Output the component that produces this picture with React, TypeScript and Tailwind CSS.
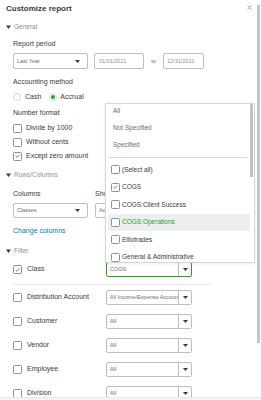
import React from "react";

const Arrow = () => (
  <svg width="5" height="3" viewBox="0 0 5 3">
    <path d="M0 0h5L2.5 3z" fill="#393a3d" />
  </svg>
);

const Tri = () => (
  <svg width="5" height="4" viewBox="0 0 5 4">
    <path d="M0 0.5h5L2.5 4z" fill="#393a3d" />
  </svg>
);

const Box = ({ checked, size = 9 }: { checked?: boolean; size?: number }) => (
  <div
    className={
      size === 9
        ? "w-[9px] h-[9px] shrink-0 border border-[#8d9096] rounded-[1.5px] bg-white flex items-center justify-center"
        : "w-[8px] h-[8px] shrink-0 border border-[#8d9096] rounded-[1.5px] bg-white flex items-center justify-center"
    }
  >
    {checked && (
      <svg width="5" height="4" viewBox="0 0 5 4">
        <path d="M0.6 2.1 L1.9 3.3 L4.4 0.7" stroke="#2ca01c" strokeWidth="0.9" fill="none" />
      </svg>
    )}
  </div>
);

const Heading = ({ text, cls }: { text: string; cls: string }) => (
  <div className={`${cls} flex items-center pl-[6px] gap-[3px]`}>
    <Tri />
    <span className="text-[6.5px] text-[#8d9096]">{text}</span>
  </div>
);

const FilterRow = ({
  label,
  value,
  checked,
  green,
  cls,
}: {
  label: string;
  value: string;
  checked?: boolean;
  green?: boolean;
  cls: string;
}) => (
  <div className={`${cls} flex items-center h-[15px] shrink-0 pl-[13px]`}>
    <Box checked={checked} />
    <span className="ml-[5px] w-[79px] text-[7px] text-[#393a3d] whitespace-nowrap">{label}</span>
    <div
      className={
        green
          ? "w-[86px] h-[15px] border border-[#2ca01c] rounded-[2px] flex bg-white"
          : "w-[86px] h-[15px] border border-[#babec5] rounded-[2px] flex bg-white"
      }
    >
      <div className="flex-1 pl-[3px] text-[5.5px] text-[#6b6c72] flex items-center overflow-hidden whitespace-nowrap">
        {value}
      </div>
      <div className="w-[13px] border-l border-[#babec5] flex items-center justify-center">
        <Arrow />
      </div>
    </div>
  </div>
);

const DDItem = ({
  text,
  checked,
  active,
}: {
  text: string;
  checked?: boolean;
  active?: boolean;
}) => (
  <div
    className={
      active
        ? "h-[17.5px] shrink-0 flex items-center pl-[3px] gap-[2px] bg-[#eceef1]"
        : "h-[17.5px] shrink-0 flex items-center pl-[3px] gap-[2px]"
    }
  >
    <Box checked={checked} />
    <span
      className={
        active
          ? "text-[6.5px] text-[#2ca01c] whitespace-nowrap"
          : "text-[6.5px] text-[#393a3d] whitespace-nowrap"
      }
    >
      {text}
    </span>
  </div>
);

export default function App() {
  return (
    <div className="w-[261px] h-[400px] bg-white overflow-hidden relative flex flex-col font-['Liberation_Sans',Arial,sans-serif]">
      <div className="flex flex-1 min-h-0">
        <div className="w-[257px] flex flex-col overflow-hidden">
          {/* header */}
          <div className="h-[18px] shrink-0 flex items-center pl-[6px]">
            <span className="text-[8px] font-bold text-[#393a3d]">Customize report</span>
            <svg className="ml-auto mr-[5px] mb-[3px]" width="5" height="5" viewBox="0 0 5 5">
              <path d="M0.5 0.5L4.5 4.5M4.5 0.5L0.5 4.5" stroke="#8d9096" strokeWidth="0.8" />
            </svg>
          </div>

          <Heading text="General" cls="h-[18px] shrink-0" />

          <div className="h-[16px] shrink-0 flex items-center pl-[13px] text-[7px] text-[#393a3d]">
            Report period
          </div>

          <div className="mt-[1px] h-[16px] shrink-0 flex items-center pl-[13px]">
            <div className="w-[75px] h-[16px] border border-[#babec5] rounded-[2px] flex items-center pl-[3px] pr-[7px] justify-between">
              <span className="text-[5.5px] text-[#6b6c72]">Last Year</span>
              <Arrow />
            </div>
            <div className="ml-[6px] w-[50px] h-[16px] border border-[#babec5] rounded-[2px] flex items-center pl-[4px] text-[5.5px] text-[#8d9096]">
              01/01/2021
            </div>
            <div className="w-[19px] text-center text-[5.5px] text-[#6b6c72]">to</div>
            <div className="w-[41px] h-[16px] border border-[#babec5] rounded-[2px] flex items-center pl-[3px] text-[5.5px] text-[#8d9096]">
              12/31/2021
            </div>
          </div>

          <div className="mt-[5px] h-[16px] shrink-0 flex items-center pl-[13px] text-[7px] text-[#393a3d]">
            Accounting method
          </div>

          <div className="h-[14px] shrink-0 flex items-center pl-[13px] text-[7px] text-[#393a3d]">
            <div className="w-[8px] h-[8px] rounded-full border border-[#d4d7dc]" />
            <span className="ml-[4px]">Cash</span>
            <div className="ml-[8px] w-[8px] h-[8px] rounded-full border border-[#d4d7dc] flex items-center justify-center">
              <div className="w-[4px] h-[4px] rounded-full bg-[#2ca01c]" />
            </div>
            <span className="ml-[3px]">Accrual</span>
          </div>

          <div className="mt-[1px] h-[16px] shrink-0 flex items-center pl-[13px] text-[7px] text-[#393a3d]">
            Number format
          </div>

          {[
            ["Divide by 1000", false],
            ["Without cents", false],
            ["Except zero amount", true],
          ].map(([t, c]) => (
            <div key={t as string} className="h-[14px] shrink-0 flex items-center pl-[13px] gap-[4px]">
              <Box checked={c as boolean} />
              <span className="text-[7px] text-[#393a3d]">{t as string}</span>
            </div>
          ))}

          <Heading text="Rows/Columns" cls="mt-[3px] h-[18px] shrink-0" />

          <div className="mt-[2px] h-[16px] shrink-0 flex items-center pl-[13px] text-[7px] text-[#393a3d]">
            <span className="w-[82px]">Columns</span>
            <span className="whitespace-nowrap">Show non-zero or active only</span>
          </div>

          <div className="mt-[1px] h-[15px] shrink-0 flex items-center pl-[13px]">
            <div className="w-[75px] h-[15px] border border-[#babec5] rounded-[2px] flex items-center pl-[3px] pr-[7px] justify-between">
              <span className="text-[5.5px] text-[#6b6c72]">Classes</span>
              <Arrow />
            </div>
            <div className="ml-[7px] w-[120px] h-[15px] border border-[#babec5] rounded-[2px] flex items-center pl-[3px]">
              <span className="text-[5.5px] text-[#6b6c72] whitespace-nowrap">Active rows/active columns</span>
            </div>
          </div>

          <div className="mt-[5px] h-[16px] shrink-0 flex items-center pl-[13px] text-[7px] text-[#0077c5]">
            Change columns
          </div>

          <Heading text="Filter" cls="mt-[4px] h-[16px] shrink-0" />

          <FilterRow cls="mt-[3px]" label="Class" value="COGS" checked green />

          <div className="mt-[7px] ml-[13px] w-[198px] shrink-0 border-t border-[#e3e5e8]" />

          <FilterRow cls="mt-[5px]" label="Distribution Account" value="All Income/Expense Accounts" />
          <FilterRow cls="mt-[9px]" label="Customer" value="All" />
          <FilterRow cls="mt-[9px]" label="Vendor" value="All" />
          <FilterRow cls="mt-[9px]" label="Employee" value="All" />
          <FilterRow cls="mt-[9px]" label="Division" value="All" />
        </div>

        <div className="w-[4px] pt-[5px] shrink-0">
          <div className="w-[3px] h-[338px] bg-[#c6c6c6]" />
        </div>
      </div>

      <div className="h-[3px] shrink-0 bg-[#f4f5f8] border-t border-[#e6e7ea]" />

      {/* dropdown popup */}
      <div className="absolute left-[105px] top-[103px] w-[150px] h-[160px] border border-[#d4d7dc] bg-white flex overflow-hidden shadow-[0_1px_3px_rgba(0,0,0,0.08)]">
        <div className="w-[144px] pl-[2px] flex flex-col">
          <div className="h-[15px] shrink-0 flex items-center pb-[2px] pl-[5px] text-[6.5px] text-[#6b6c72]">All</div>
          <div className="h-[17px] shrink-0 flex items-center pl-[5px] text-[6.5px] text-[#6b6c72]">Not Specified</div>
          <div className="h-[17px] shrink-0 flex items-center pl-[5px] text-[6.5px] text-[#6b6c72]">Specified</div>
          <div className="mt-[4px] ml-[1px] w-[138px] shrink-0 border-t border-[#d4d7dc]" />
          <div className="mt-[3px] flex flex-col">
            <DDItem text="(Select all)" />
            <DDItem text="COGS" checked />
            <DDItem text="COGS:Client Success" />
            <DDItem text="COGS:Operations" active />
            <DDItem text="Elliotrades" />
            <DDItem text="General & Administrative" />
          </div>
        </div>
        <div className="w-[4px] shrink-0 pt-0">
          <div className="w-[3px] h-[73px] bg-[#c1c1c1]" />
        </div>
      </div>
    </div>
  );
}
